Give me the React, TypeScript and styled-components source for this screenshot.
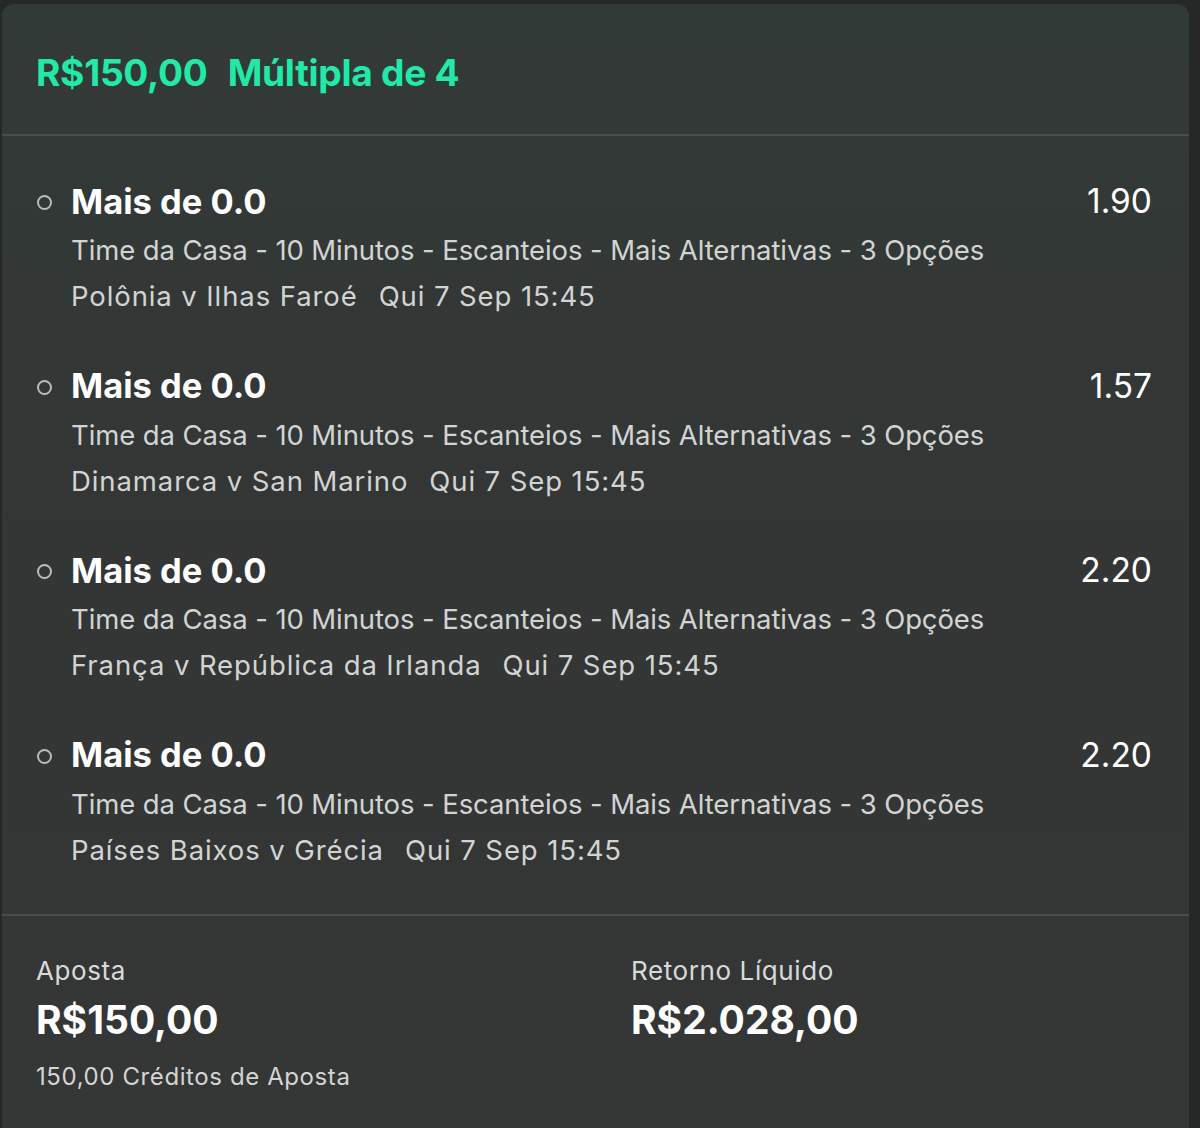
import React from 'react';
import styled, { createGlobalStyle } from 'styled-components';

interface ISelection {
  odds: string;
  match: string;
}

const selections: ISelection[] = [
  { odds: '1.90', match: 'Polônia v Ilhas Faroé' },
  { odds: '1.57', match: 'Dinamarca v San Marino' },
  { odds: '2.20', match: 'França v República da Irlanda' },
  { odds: '2.20', match: 'Países Baixos v Grécia' },
];

export default function App() {
  return (
    <>
      <GlobalStyle />
      <Page>
        <Card>
          <Header>
            <span>R$150,00</span>
            <span>Múltipla de 4</span>
          </Header>
          <List>
            {selections.map((s, i) => (
              <Row key={i}>
                <Bullet />
                <RowBody>
                  <TitleLine>
                    <Title>Mais de 0.0</Title>
                    <Odds>{s.odds}</Odds>
                  </TitleLine>
                  <Market>Time da Casa - 10 Minutos - Escanteios - Mais Alternativas - 3 Opções</Market>
                  <Fixture>
                    {s.match}
                    <DateText>Qui 7 Sep 15:45</DateText>
                  </Fixture>
                </RowBody>
              </Row>
            ))}
          </List>
          <Footer>
            <Col>
              <Label>Aposta</Label>
              <Amount>R$150,00</Amount>
              <Note>150,00 Créditos de Aposta</Note>
            </Col>
            <Col>
              <Label>Retorno Líquido</Label>
              <Amount>R$2.028,00</Amount>
            </Col>
          </Footer>
        </Card>
      </Page>
    </>
  );
}

const GlobalStyle = createGlobalStyle`
  html, body {
    margin: 0;
    padding: 0;
    background: #262727;
    font-family: Inter, "Noto Sans", sans-serif;
  }
`;

const Page = styled.div`
  width: 1200px;
  height: 1128px;
  padding: 4px 11px 0 2px;
  box-sizing: border-box;
  overflow: hidden;
`;

const Card = styled.div`
  height: 1140px;
  border-radius: 12px 12px 0 0;
  background: linear-gradient(180deg, #323a37 0%, #333635 45%, #353636 100%);
`;

const Header = styled.div`
  display: flex;
  gap: 20px;
  align-items: center;
  height: 132px;
  padding: 6px 0 0 34px;
  box-sizing: border-box;
  border-bottom: 2px solid #4a4e4d;
  color: #22e8a8;
  font-size: 37.2px;
  font-weight: 700;
  letter-spacing: -0.3px;
`;

const List = styled.div`
  display: flex;
  flex-direction: column;
  padding: 40px 0 0;
  border-bottom: 2px solid #4a4c4c;
`;

const Row = styled.div`
  display: flex;
  height: 184.5px;
`;

const Bullet = styled.div`
  width: 11px;
  height: 11px;
  margin: 19px 19px 0 35px;
  border: 2px solid #b9bcbb;
  border-radius: 50%;
  flex-shrink: 0;
`;

const RowBody = styled.div`
  flex: 1;
  display: flex;
  flex-direction: column;
  padding-right: 37px;
`;

const TitleLine = styled.div`
  display: flex;
  justify-content: space-between;
  align-items: center;
  height: 50px;
  margin-bottom: 1px;
`;

const Title = styled.span`
  color: #ffffff;
  font-size: 34.5px;
  font-weight: 700;
`;

const Odds = styled.span`
  color: #ffffff;
  font-size: 33.5px;
  font-weight: 400;
`;

const Market = styled.div`
  color: #d2d4d3;
  font-size: 27.5px;
  line-height: 46px;
  letter-spacing: -0.1px;
`;

const Fixture = styled(Market)`
  letter-spacing: 0.9px;
`;

const DateText = styled.span`
  margin-left: 21px;
`;

const Footer = styled.div`
  display: grid;
  grid-template-columns: 595px 1fr;
  padding: 38px 0 0 34px;
`;

const Col = styled.div`
  display: flex;
  flex-direction: column;
`;

const Label = styled.div`
  color: #d8dad9;
  font-size: 26px;
  line-height: 34px;
  letter-spacing: 0.6px;
`;

const Amount = styled.div`
  color: #ffffff;
  font-size: 39px;
  font-weight: 700;
  line-height: 64px;
`;

const Note = styled.div`
  color: #d3d5d4;
  font-size: 24px;
  line-height: 50px;
  letter-spacing: 0.6px;
`;
